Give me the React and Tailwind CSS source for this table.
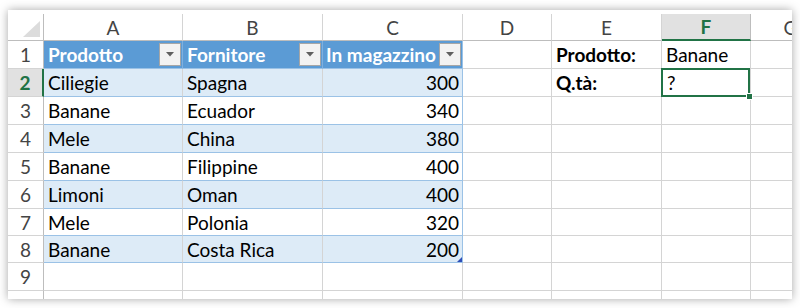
import React from "react";

const FONT = { fontFamily: "Lato, 'Liberation Sans', sans-serif" };

function FilterBtn() {
  return (
    <div className="w-[22px] h-[23px] shrink-0 border border-[#a6a6a6] bg-[#f2f2f2] flex items-center justify-center mr-[1px]">
      <svg width="8" height="5" viewBox="0 0 8 5">
        <polygon points="0,0 8,0 4,4.5" fill="#5f5f5f" />
      </svg>
    </div>
  );
}

const data = [
  ["Ciliegie", "Spagna", "300"],
  ["Banane", "Ecuador", "340"],
  ["Mele", "China", "380"],
  ["Banane", "Filippine", "400"],
  ["Limoni", "Oman", "400"],
  ["Mele", "Polonia", "320"],
  ["Banane", "Costa Rica", "200"],
];

const rowH = ["h-[28px]", "h-[28px]", "h-[28px]", "h-[28px]", "h-[28px]", "h-[28px]", "h-[27px]", "h-[27px]", "h-[28px]"];

function RowHeader({ n, selected }) {
  if (selected) {
    return (
      <div className="w-[36px] shrink-0 h-full flex items-center justify-center bg-[#e1e1e1] border-r-2 border-r-[#217346] border-b border-b-[#d4d4d4] text-[#217346] font-bold">
        {n}
      </div>
    );
  }
  return (
    <div className="w-[36px] shrink-0 h-full flex items-center justify-center border-r border-r-[#bdbdbd] border-b border-b-[#d4d4d4] text-[#444444]">
      {n}
    </div>
  );
}

function Empty({ w }) {
  return <div className={`${w} shrink-0 h-full border-r border-b border-[#d4d4d4]`} />;
}

export default function App() {
  return (
    <div className="w-[800px] h-[308px] bg-white pt-[10px] pl-[8px]" style={FONT}>
      <div className="w-[784px] h-[289px] overflow-hidden bg-white shadow-[0_0_9px_rgba(0,0,0,0.35)] flex flex-col text-[19px] leading-none text-black">
        {/* column header row */}
        <div className="h-[31px] shrink-0 pt-[4px] flex">
          <div className="w-[36px] shrink-0 h-full border-r border-b border-[#bdbdbd] relative">
            <svg className="absolute left-[15px] top-[7px]" width="17" height="16" viewBox="0 0 17 16">
              <polygon points="17,0 17,16 0,16" fill="#dcdcdc" />
            </svg>
          </div>
          <div className="w-[139px] shrink-0 h-full flex items-center justify-center border-r border-r-[#d4d4d4] border-b border-b-[#bdbdbd] text-[#444444]">A</div>
          <div className="w-[140px] shrink-0 h-full flex items-center justify-center border-r border-r-[#d4d4d4] border-b border-b-[#bdbdbd] text-[#444444]">B</div>
          <div className="w-[140px] shrink-0 h-full flex items-center justify-center border-r border-r-[#d4d4d4] border-b border-b-[#bdbdbd] text-[#444444]">C</div>
          <div className="w-[89px] shrink-0 h-full flex items-center justify-center border-r border-r-[#d4d4d4] border-b border-b-[#bdbdbd] text-[#444444]">D</div>
          <div className="w-[110px] shrink-0 h-full flex items-center justify-center border-r border-r-[#d4d4d4] border-b border-b-[#bdbdbd] text-[#444444]">E</div>
          <div className="w-[89px] shrink-0 h-full flex items-center justify-center bg-[#e1e1e1] border-r border-r-[#bdbdbd] border-b-2 border-b-[#217346] text-[#217346] font-bold">F</div>
          <div className="w-[80px] shrink-0 h-full flex items-center justify-center border-r border-r-[#d4d4d4] border-b border-b-[#bdbdbd] text-[#444444]">G</div>
        </div>

        {/* row 1: table header */}
        <div className={`${rowH[0]} shrink-0 flex`}>
          <RowHeader n={1} />
          <div className="w-[139px] shrink-0 h-full flex items-center justify-between pl-[4px] bg-[#5b9bd5] border-r border-r-[#7eb0df] border-b border-b-[#9bc2e6] text-white font-bold">
            <span>Prodotto</span>
            <FilterBtn />
          </div>
          <div className="w-[140px] shrink-0 h-full flex items-center justify-between pl-[4px] bg-[#5b9bd5] border-r border-r-[#7eb0df] border-b border-b-[#9bc2e6] text-white font-bold">
            <span>Fornitore</span>
            <FilterBtn />
          </div>
          <div className="w-[140px] shrink-0 h-full flex items-center justify-between pl-[3px] bg-[#5b9bd5] border-r border-r-[#9bc2e6] border-b border-b-[#9bc2e6] text-white font-bold">
            <span>In magazzino</span>
            <FilterBtn />
          </div>
          <Empty w="w-[89px]" />
          <div className="w-[110px] shrink-0 h-full flex items-center pl-[4px] border-r border-b border-[#d4d4d4] font-bold">Prodotto:</div>
          <div className="w-[89px] shrink-0 h-full flex items-center pl-[4px] border-r border-b border-[#d4d4d4]">Banane</div>
          <Empty w="w-[80px]" />
        </div>

        {/* data rows */}
        {data.map((r, i) => {
          const n = i + 2;
          const striped = i % 2 === 0;
          const bg = striped ? "bg-[#ddebf7]" : "bg-white";
          return (
            <div key={n} className={`${rowH[i + 1]} shrink-0 flex`}>
              <RowHeader n={n} selected={n === 2} />
              <div className={`${bg} w-[139px] shrink-0 h-full flex items-center pl-[4px] border-r border-r-[#d4d4d4] border-b border-b-[#9bc2e6]`}>{r[0]}</div>
              <div className={`${bg} w-[140px] shrink-0 h-full flex items-center pl-[4px] border-r border-r-[#d4d4d4] border-b border-b-[#9bc2e6]`}>{r[1]}</div>
              <div className={`${bg} w-[140px] shrink-0 h-full flex items-center justify-end pr-[3px] border-r border-r-[#9bc2e6] border-b border-b-[#9bc2e6] relative`}>
                {r[2]}
                {n === 8 && (
                  <svg className="absolute right-[0px] bottom-[0px]" width="5" height="5" viewBox="0 0 5 5">
                    <polygon points="5,0 5,5 0,5" fill="#2f4fb8" />
                  </svg>
                )}
              </div>
              <Empty w="w-[89px]" />
              {n === 2 ? (
                <>
                  <div className="w-[110px] shrink-0 h-full flex items-center pl-[4px] border-r border-b border-[#d4d4d4] font-bold">Q.tà:</div>
                  <div className="w-[89px] shrink-0 h-full relative border-r border-b border-[#d4d4d4]">
                    <div className="absolute -left-[1px] -top-[1px] -right-[0px] bottom-[-1px] border-2 border-[#217346] flex items-center pl-[4px]">?</div>
                    <div className="absolute -right-[3px] -bottom-[4px] w-[7px] h-[7px] bg-[#217346] border border-white" />
                  </div>
                </>
              ) : (
                <>
                  <Empty w="w-[110px]" />
                  <Empty w="w-[89px]" />
                </>
              )}
              <Empty w="w-[80px]" />
            </div>
          );
        })}

        {/* row 9 */}
        <div className={`${rowH[8]} shrink-0 flex`}>
          <RowHeader n={9} />
          <Empty w="w-[139px]" />
          <Empty w="w-[140px]" />
          <Empty w="w-[140px]" />
          <Empty w="w-[89px]" />
          <Empty w="w-[110px]" />
          <Empty w="w-[89px]" />
          <Empty w="w-[80px]" />
        </div>
        {/* partial row 10 (number hidden below the fold) */}
        <div className="h-[28px] shrink-0 flex">
          <div className="w-[36px] shrink-0 h-full border-r border-r-[#bdbdbd]" />
          <Empty w="w-[139px]" />
          <Empty w="w-[140px]" />
          <Empty w="w-[140px]" />
          <Empty w="w-[89px]" />
          <Empty w="w-[110px]" />
          <Empty w="w-[89px]" />
          <Empty w="w-[80px]" />
        </div>
      </div>
    </div>
  );
}
